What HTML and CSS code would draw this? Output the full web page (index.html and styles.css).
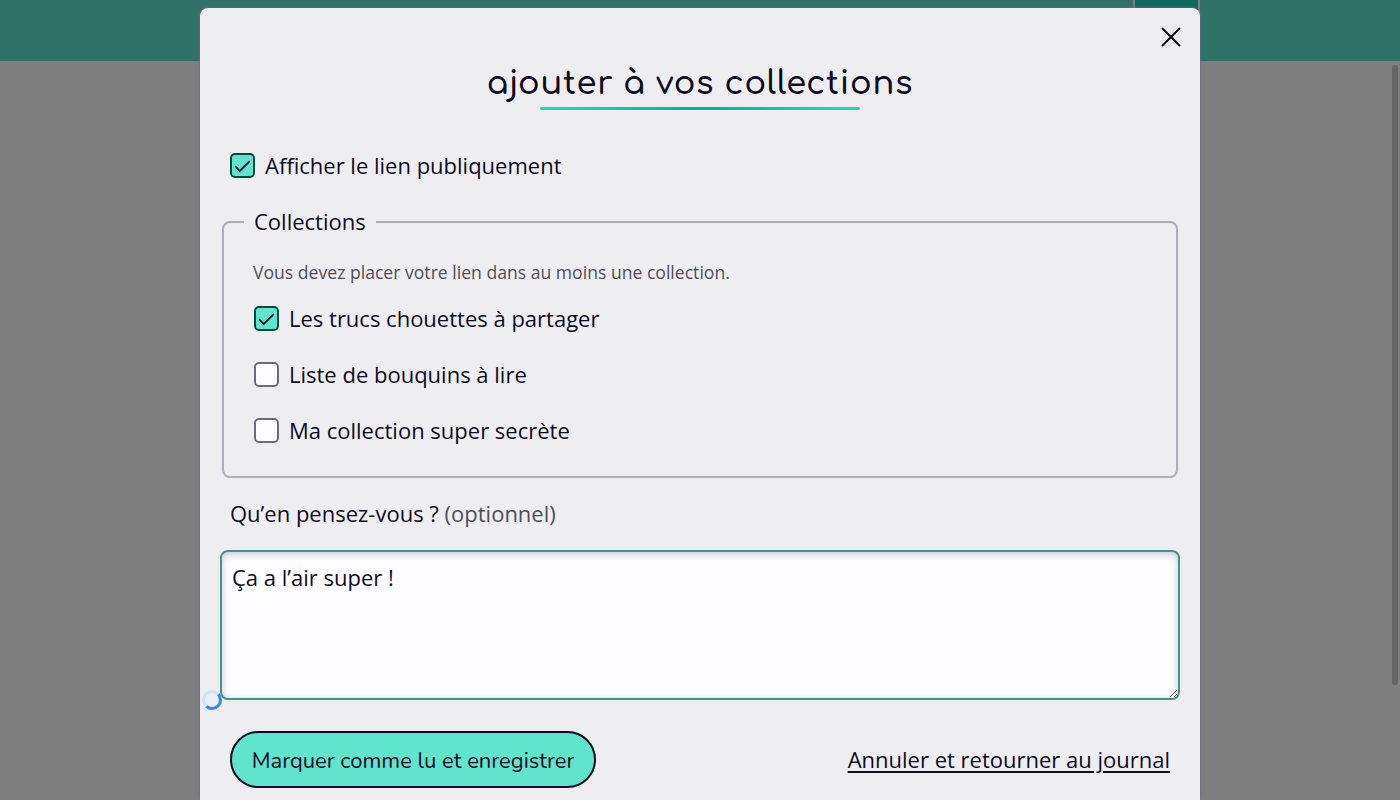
FILE: index.html
```html
<!DOCTYPE html>
<html lang="fr">
<head>
<meta charset="utf-8">
<title>Ajouter à vos collections</title>
<link rel="stylesheet" href="styles.css">
</head>
<body>
<div class="page">
  <header class="topbar"><span class="topbar-tab"></span></header>
  <div class="scrollbar"></div>
</div>
<main class="modal">
  <button class="close" aria-label="Fermer"><svg width="20" height="20" viewBox="0 0 20 20"><path d="M1.5 1.5 18.5 18.5M18.5 1.5 1.5 18.5"/></svg></button>
  <h1 class="title">ajouter à vos collections</h1>
  <div class="underline"></div>
  <form class="form">
    <label class="option public"><span class="box checked"><svg width="21" height="21" viewBox="0 0 21 21"><path d="M3.2 11.2 7.8 16 17.8 6.2"/></svg></span><span>Afficher le lien publiquement</span></label>
    <fieldset class="collections">
      <legend class="legend">Collections</legend>
      <p class="hint">Vous devez placer votre lien dans au moins une collection.</p>
      <label class="option"><span class="box checked"><svg width="21" height="21" viewBox="0 0 21 21"><path d="M3.2 11.2 7.8 16 17.8 6.2"/></svg></span><span>Les trucs chouettes à partager</span></label>
      <label class="option"><span class="box"></span><span>Liste de bouquins à lire</span></label>
      <label class="option"><span class="box"></span><span>Ma collection super secrète</span></label>
    </fieldset>
    <div class="label">Qu’en pensez-vous ? <span class="optional">(optionnel)</span></div>
    <div class="field">
      <textarea class="comment">Ça a l’air super !</textarea>
      <svg class="spinner" width="20" height="20" viewBox="0 0 20 20"><circle class="track" cx="10" cy="10" r="8.5"/><path class="arc" d="M16.3 4.3A8.5 8.5 0 0 1 4.3 16.3"/></svg>
    </div>
    <div class="actions">
      <button class="submit" type="button">Marquer comme lu et enregistrer</button>
      <a class="cancel">Annuler et retourner au journal</a>
    </div>
  </form>
</main>
</body>
</html>
```
FILE: styles.css
```css
* { box-sizing: border-box; }
body {
  margin: 0;
  height: 800px;
  overflow: hidden;
  padding-top: 8px;
  background: #7f7f80;
  color: #0d0b1e;
  font-family: "Open Sans", "Noto Sans", sans-serif;
  font-size: 22px;
  line-height: 32px;
}
.page { position: absolute; inset: 0; overflow: hidden; }
.topbar { display: flex; justify-content: flex-end; height: 61px; padding-right: 200px; background: #317267; }
.topbar-tab { width: 67px; background: #0e695a; border: solid #7c7f80; border-width: 0 2px; }
.scrollbar { width: 6px; height: 620px; margin: 4px 2px 0 auto; border-radius: 3px; background: #656566; }
.modal {
  position: relative;
  width: 1000px;
  height: 792px;
  margin: 0 auto;
  padding: 50px 20px 0;
  border-radius: 8px 8px 0 0;
  background: #eeeef0;
  box-shadow: 0 0 4px #6c6b7c;
}
.close { position: absolute; top: 19px; right: 19px; width: 20px; height: 20px; padding: 0; border: 0; background: none; }
.close svg { display: block; fill: none; stroke: #0b0b10; stroke-width: 2; stroke-linecap: round; }
.title {
  height: 49px;
  margin: 0;
  text-align: center;
  font-family: Comfortaa, Quicksand, sans-serif;
  font-size: 32px;
  font-weight: 650;
  line-height: 51px;
  letter-spacing: 0.8px;
  white-space: nowrap;
}
.underline { width: 320px; height: 3px; margin: 0 auto; border-radius: 2px; background: linear-gradient(90deg, #21d9b5, #00b493, #21d9b5); }
.form { padding-top: 39px; }
.option { display: flex; align-items: center; gap: 10px; height: 32px; }
.public { padding-left: 10px; }
.box { width: 25px; height: 25px; flex: none; border: 2px solid #6c6a7a; border-radius: 5px; background: #fdfdff; }
.box.checked { border-color: #04493f; background: #61e4ce; }
.box svg { display: block; fill: none; stroke: #0d0b1e; stroke-width: 1.8; }
.collections { height: 273px; margin: 24px 2px 0; padding: 17px 30px 0; border: 2px solid #aeadb8; border-radius: 8px; }
.legend { height: 34px; margin-left: -10px; padding: 0 10px; }
.hint { height: 32px; margin: 0 0 14px -1px; color: #504f59; font-size: 17.6px; }
.collections .option + .option { margin-top: 24px; }
.label { height: 32px; margin: 19px 10px 0; }
.optional { color: #504f59; }
.field { position: relative; height: 150px; margin-top: 21px; }
.comment {
  display: block;
  width: 960px;
  height: 150px;
  padding: 9px 10px;
  border: 2px solid #43958a;
  border-radius: 8px;
  outline: 0;
  background: #fdfdff;
  box-shadow: inset 0 2px 7px #c7c6d2;
  color: #0d0b1e;
  font: inherit;
  resize: vertical;
}
.spinner { position: absolute; left: -18px; bottom: -10px; fill: none; stroke-width: 3; }
.track { stroke: #cee4f8; }
.arc { stroke: #3189e6; }
.actions { display: flex; justify-content: space-between; align-items: center; margin-top: 31px; padding: 0 10px; }
.submit {
  width: 366px;
  height: 57px;
  padding: 2px 0 0;
  border: 2px solid #0d0b1e;
  border-radius: 29px;
  background: #61e4ce;
  color: #0d0b1e;
  font: 22px/32px Nunito, "Open Sans", sans-serif;
  white-space: nowrap;
}
.cancel { padding-bottom: 2px; text-decoration: underline; text-decoration-thickness: 2px; text-underline-offset: 3px; }
```
